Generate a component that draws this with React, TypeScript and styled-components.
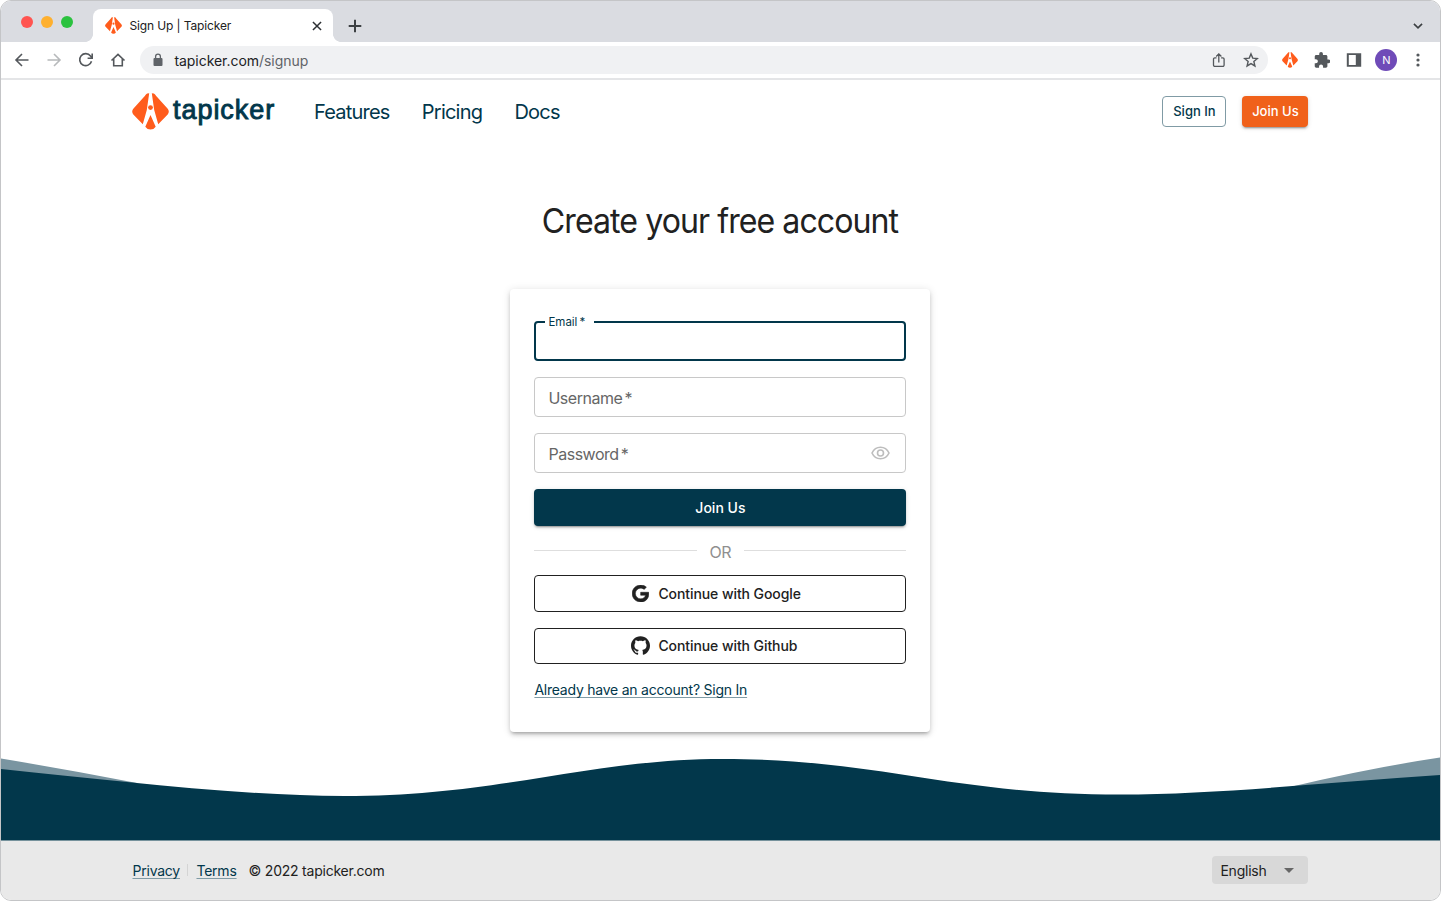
import React from "react";
import styled, { createGlobalStyle } from "styled-components";

const navy = "#02374b";

const GlobalStyle = createGlobalStyle`
  * { box-sizing: border-box; }
  html, body { margin: 0; padding: 0; background: #fff; }
  body { font-family: Inter, "Liberation Sans", sans-serif; color: #212121; }
  button { font-family: inherit; cursor: pointer; }
`;

const Window = styled.div`
  width: 1441px;
  height: 901px;
  overflow: hidden;
  display: flex;
  flex-direction: column;
  background: #fff;
  border: 1px solid #c4c5c7;
  border-radius: 11px;
`;

const TabStrip = styled.div`
  height: 41px;
  flex: none;
  background: #dadce1;
  display: flex;
  align-items: flex-end;
`;

const Lights = styled.div`
  display: flex;
  gap: 8px;
  padding: 0 12px 14px 20.4px;
`;

const Light = styled.span<{ $color: string }>`
  width: 12px;
  height: 12px;
  border-radius: 50%;
  background: ${(p) => p.$color};
`;

const TabFoot = styled.span<{ $side: "left" | "right" }>`
  width: 8px;
  height: 8px;
  flex: none;
  background: radial-gradient(circle at ${(p) => (p.$side === "left" ? "0 0" : "100% 0")}, #dadce1 7.6px, #fff 8.2px);
`;

const Tab = styled.div`
  width: 240px;
  height: 33px;
  background: #fff;
  border-radius: 8px 8px 0 0;
  display: flex;
  align-items: center;
  padding: 0 11px 0 12px;
`;

const TabTitle = styled.span`
  font-size: 12px;
  letter-spacing: -0.12px;
  margin-left: 7px;
  flex: 1;
  white-space: nowrap;
`;

const NewTab = styled.div`
  flex: 1;
  height: 33px;
  display: flex;
  align-items: center;
  justify-content: space-between;
  padding: 0 17px 0 0;
`;

const Toolbar = styled.div`
  height: 38px;
  flex: none;
  border-bottom: 2px solid #e4e5e7;
  display: flex;
  align-items: center;
  padding: 0 13.6px 0 13.4px;
`;

const ToolIcons = styled.div<{ $gap: number }>`
  display: flex;
  align-items: center;
  gap: ${(p) => p.$gap}px;
  svg { display: block; }
`;

const AddressBar = styled.div`
  flex: 1;
  height: 28px;
  margin: 0 14px 0 14px;
  border-radius: 14px;
  background: #f0f1f3;
  display: flex;
  align-items: center;
  padding: 0 9px 0 10px;
`;

const Address = styled.span`
  flex: 1;
  margin-left: 8px;
  font-size: 14px;
  letter-spacing: -0.04px;
  color: #202124;
  span { color: #5f6368; }
`;

const Avatar = styled.span`
  width: 22px;
  height: 22px;
  border-radius: 50%;
  background: #6f4bb8;
  color: #fff;
  font-size: 11px;
  display: flex;
  align-items: center;
  justify-content: center;
  margin: 0 -3px;
`;

const Page = styled.main`
  flex: 1;
  display: flex;
  flex-direction: column;
  min-height: 0;
`;

const Header = styled.header`
  height: 62px;
  margin: 0 131.6px 2px 131px;
  display: flex;
  align-items: center;
`;

const Brand = styled.div`
  display: flex;
  align-items: center;
  width: 182px;
`;

const Wordmark = styled.span`
  font-family: "Liberation Sans", sans-serif;
  font-size: 27px;
  line-height: 32px;
  color: ${navy};
  -webkit-text-stroke: 0.9px ${navy};
  letter-spacing: 0.95px;
  margin: -2px 0 0 4px;
`;

const Nav = styled.nav`
  display: flex;
  gap: 32.2px;
  flex: 1;
  padding-top: 2px;
`;

const NavLink = styled.a`
  font-size: 20px;
  line-height: 32px;
  color: ${navy};
  letter-spacing: -0.78px;
`;

const HeaderButton = styled.button<{ $filled?: boolean }>`
  width: ${(p) => (p.$filled ? 66 : 64)}px;
  height: 31px;
  padding: 0;
  margin-left: ${(p) => (p.$filled ? 16 : 0)}px;
  border-radius: 4px;
  border: ${(p) => (p.$filled ? "none" : "1px solid #809ba5")};
  background: ${(p) => (p.$filled ? "#f0611a" : "#fff")};
  color: ${(p) => (p.$filled ? "#fff" : navy)};
  box-shadow: ${(p) => (p.$filled ? "0 3px 1px -2px rgba(0,0,0,.2), 0 2px 2px rgba(0,0,0,.14), 0 1px 5px rgba(0,0,0,.12)" : "none")};
  font-size: 13px;
  font-weight: 500;
`;

const Title = styled.h1`
  margin: 56px 1px 0 0;
  height: 44px;
  line-height: 43px;
  text-align: center;
  font-size: 33.5px;
  font-weight: 400;
  letter-spacing: -1px;
  transform: scaleX(0.959);
`;

const Card = styled.form`
  width: 420px;
  height: 443px;
  flex: none;
  margin: 45px 0 0 509.4px;
  padding: 32px 24px 0;
  border-radius: 4px;
  background: #fff;
  box-shadow: 0 3px 3px -2px rgba(0,0,0,.2), 0 3px 4px rgba(0,0,0,.14), 0 1px 8px rgba(0,0,0,.12);
  display: flex;
  flex-direction: column;
`;

const Field = styled.div<{ $focused?: boolean }>`
  position: relative;
  height: 40px;
  flex: none;
  margin: 0 0 16px;
  padding: 0 15px 0 13px;
  border: ${(p) => (p.$focused ? `2px solid ${navy}` : "1px solid #c8c8c8")};
  border-radius: 4px;
  display: flex;
  align-items: center;
  justify-content: space-between;
`;

const FloatingLabel = styled.label`
  position: absolute;
  top: -9.5px;
  left: 9px;
  width: 49px;
  padding-left: 3px;
  background: #fff;
  color: ${navy};
  font-size: 11.5px;
  line-height: 16px;
`;

const FieldLabel = styled.label`
  font-size: 16px;
  line-height: 22px;
  padding-top: 2px;
  color: #666;
  letter-spacing: -0.47px;
`;

const Required = styled.span`
  margin-left: 2px;
`;

const Submit = styled.button`
  height: 37px;
  flex: none;
  border: 0;
  border-radius: 4px;
  background: ${navy};
  color: #fff;
  font-size: 14px;
  font-weight: 500;
  box-shadow: 0 3px 1px -2px rgba(0,0,0,.2), 0 2px 2px rgba(0,0,0,.14), 0 1px 5px rgba(0,0,0,.12);
`;

const Divider = styled.div`
  display: flex;
  height: 24px;
  margin: 12px 0 13px;
  align-items: center;
  gap: 12px;
  color: #8f8f8f;
  font-size: 16px;
  &::before, &::after {
    content: "";
    flex: 1;
    height: 1px;
    background: #dedede;
  }
  span { width: 23px; text-align: center; padding-top: 3px; letter-spacing: -0.3px; }
`;

const ProviderButton = styled.button`
  height: 36.5px;
  flex: none;
  margin-bottom: 16px;
  padding: 0 0 0 96px;
  border: 1px solid #212121;
  border-radius: 4px;
  background: #fff;
  color: #212121;
  display: flex;
  align-items: center;
  gap: 8px;
  font-size: 14px;
  font-weight: 500;
  letter-spacing: -0.08px;
`;

const ProviderIcon = styled.span`
  width: 19px;
  display: flex;
  justify-content: center;
`;

const TextLink = styled.a`
  color: ${navy};
  font-size: 14px;
  letter-spacing: -0.23px;
  text-decoration: underline;
  text-decoration-color: #809ba5;
  text-decoration-thickness: 1px;
  text-underline-offset: 2px;
  text-decoration-skip-ink: none;
`;

const LinkRow = styled.div`
  margin-top: -1px;
`;

const Wave = styled.svg`
  display: block;
  margin-top: auto;
  flex: none;
`;

const Footer = styled.footer`
  height: 60px;
  flex: none;
  padding: 0 131.6px 1px 131.5px;
  border-top: 1px solid #76929c;
  background: #e9e9e9;
  display: flex;
  align-items: center;
  font-size: 14px;
  letter-spacing: -0.23px;
`;

const FooterRule = styled.span`
  width: 1px;
  height: 12px;
  background: #d4d4d4;
  margin: 0 8px 0 7.5px;
`;

const Copyright = styled.span`
  margin-left: 12px;
  flex: 1;
`;

const LanguageSelect = styled.div`
  width: 96px;
  height: 28px;
  border-radius: 4px;
  background: #d8d8d8;
  display: flex;
  align-items: center;
  justify-content: space-between;
  padding: 0 14px 0 8px;
`;

function Logo({ size }: { size: number }) {
  return (
    <svg width={size} height={size} viewBox="0 0 37 37">
      <path fill="#ff5c1c" d="M15.2 0.6 17.2 .3 14.8 17 10.8 31.2 1.3 21.4Q-1 18.5 1.5 15.6L12.8 3Q14.300 1 15.2 .6ZM21.8 .6 19.8 .3 22.2 17 26.2 31.2 35.7 21.4Q38 18.5 35.5 15.6L24.2 3Q22.7 1 21.8 .6ZM18.5 22 23.7 33.8Q22 36.6 18.5 36.6T13.3 33.8Z" />
      <circle cx="18.5" cy="14.6" r="2.4" fill="#ff5c1c" />
    </svg>
  );
}

function Stroke({ d, color = "#54585c", size = 16, width = 1.6 }: { d: string; color?: string; size?: number; width?: number }) {
  return (
    <svg width={size} height={size} viewBox="0 0 16 16" fill="none" stroke={color} strokeWidth={width}>
      <path d={d} />
    </svg>
  );
}

export default function App() {
  return (
    <>
      <GlobalStyle />
      <Window>
        <TabStrip>
          <Lights>
            <Light $color="#ff5450" />
            <Light $color="#feb02f" />
            <Light $color="#2bc23f" />
          </Lights>
          <TabFoot $side="left" />
          <Tab>
            <Logo size={17} />
            <TabTitle>Sign Up | Tapicker</TabTitle>
            <Stroke size={10} width={2.4} color="#2d3034" d="M1.5 1.5l13 13M14.5 1.5l-13 13" />
          </Tab>
          <TabFoot $side="right" />
          <NewTab>
            <Stroke size={28} width={1.15} color="#3c4043" d="M8 4.4v7.2M4.4 8h7.2" />
            <Stroke size={10} width={2.6} color="#3c4043" d="M1.5 4.5 8 11l6.5-6.5" />
          </NewTab>
        </TabStrip>
        <Toolbar>
          <ToolIcons $gap={16}>
            <Stroke d="M14.5 8H2M8 2 2 8l6 6" />
            <Stroke color="#b7b9bb" d="M1.5 8H14M8 2l6 6-6 6" />
            <Stroke d="M13.5 9.2A6 6 0 1 1 12.5 4L14 5.8M14.2 1.5v4.7H9.6" />
            <Stroke d="M1.5 8.5 8 2.3l6.5 6.2M3.7 7v6.8h8.6V7" />
          </ToolIcons>
          <AddressBar>
            <svg width="16" height="16" viewBox="0 0 16 16">
              <rect x="3.5" y="6" width="9" height="8" rx="1" fill="#5f6368" />
              <path d="M5.6 6V4.5a2.4 2.4 0 0 1 4.8 0V6" fill="none" stroke="#5f6368" strokeWidth="1.3" />
            </svg>
            <Address>tapicker.com<span>/signup</span></Address>
            <ToolIcons $gap={16}>
              <Stroke width={1.3} d="M5.5 5.8H3.8A1.3 1.3 0 0 0 2.5 7.1v6A1.3 1.3 0 0 0 3.8 14.4h8a1.3 1.3 0 0 0 1.3-1.3v-6A1.3 1.3 0 0 0 11.8 5.8h-1.7M7.8 10.5V2M5.2 4.5 7.8 1.9l2.6 2.6" />
              <Stroke width={1.4} d="M8 1.9l1.75 4.2 4.55.4-3.45 3 1.05 4.45L8 11.6l-3.9 2.35 1.05-4.45-3.45-3 4.55-.4Z" />
            </ToolIcons>
          </AddressBar>
          <ToolIcons $gap={16}>
            <Logo size={16} />
            <svg width="16" height="16" viewBox="1 1 21.5 21.5" fill="#54585c">
              <path d="M20.5 11H19V7c0-1.1-.9-2-2-2h-4V3.5a2.5 2.5 0 0 0-5 0V5H4c-1.1 0-1.99.9-1.99 2v3.8H3.5c1.49 0 2.7 1.21 2.7 2.7s-1.21 2.7-2.7 2.7H2V20c0 1.1.9 2 2 2h3.8v-1.5c0-1.49 1.21-2.7 2.7-2.7s2.7 1.21 2.7 2.7V22H17c1.1 0 2-.9 2-2v-4h1.5a2.5 2.5 0 0 0 0-5z" />
            </svg>
            <svg width="16" height="16" viewBox="0 0 16 16" fill="#54585c">
              <path fillRule="evenodd" d="M.8 1.2h14.4v13.6H.8ZM2.8 3v10h7V3Z" />
            </svg>
            <Avatar>N</Avatar>
            <svg width="16" height="16" viewBox="0 0 16 16" fill="#54585c">
              <circle cx="8" cy="3" r="1.6" /><circle cx="8" cy="8" r="1.6" /><circle cx="8" cy="13" r="1.6" />
            </svg>
          </ToolIcons>
        </Toolbar>
        <Page>
          <Header>
            <Brand><Logo size={37} /><Wordmark>tapicker</Wordmark></Brand>
            <Nav>
              <NavLink>Features</NavLink>
              <NavLink>Pricing</NavLink>
              <NavLink>Docs</NavLink>
            </Nav>
            <HeaderButton>Sign In</HeaderButton>
            <HeaderButton $filled>Join Us</HeaderButton>
          </Header>
          <Title>Create your free account</Title>
          <Card>
            <Field $focused><FloatingLabel>Email<Required>*</Required></FloatingLabel></Field>
            <Field><FieldLabel>Username<Required>*</Required></FieldLabel></Field>
            <Field>
              <FieldLabel>Password<Required>*</Required></FieldLabel>
              <svg width="19" height="14" viewBox="0 0 19 14" fill="none" stroke="#bdbdbd" strokeWidth="1.6">
                <path d="M1 7C4.6-.7 14.4-.7 18 7 14.4 14.7 4.6 14.7 1 7Z" />
                <circle cx="9.5" cy="7" r="3" />
              </svg>
            </Field>
            <Submit type="button">Join Us</Submit>
            <Divider><span>OR</span></Divider>
            <ProviderButton type="button">
              <ProviderIcon>
                <svg width="17" height="17" viewBox="0 0 24 24" fill="#212121" stroke="#212121" strokeWidth="0.8">
                  <path d="M12.24 10.285V14.4h6.806c-.275 1.765-2.056 5.174-6.806 5.174-4.095 0-7.439-3.389-7.439-7.574s3.345-7.574 7.439-7.574c2.33 0 3.891.989 4.785 1.849l3.254-3.138C18.189 1.186 15.479 0 12.24 0c-6.635 0-12 5.365-12 12s5.365 12 12 12c6.926 0 11.52-4.869 11.52-11.726 0-.788-.085-1.39-.189-1.989H12.24z" />
                </svg>
              </ProviderIcon>
              Continue with Google
            </ProviderButton>
            <ProviderButton type="button">
              <ProviderIcon>
                <svg width="19" height="19" viewBox="0 0 24 24" fill="#212121">
                  <path d="M12 .297c-6.63 0-12 5.373-12 12 0 5.303 3.438 9.8 8.205 11.385.6.113.82-.258.82-.577 0-.285-.01-1.04-.015-2.04-3.338.724-4.042-1.61-4.042-1.61C4.422 18.07 3.633 17.7 3.633 17.7c-1.087-.744.084-.729.084-.729 1.205.084 1.838 1.236 1.838 1.236 1.07 1.835 2.809 1.305 3.495.998.108-.776.417-1.305.76-1.605-2.665-.3-5.466-1.332-5.466-5.93 0-1.31.465-2.38 1.235-3.22-.135-.303-.54-1.523.105-3.176 0 0 1.005-.322 3.3 1.23.96-.267 1.98-.399 3-.405 1.02.006 2.04.138 3 .405 2.28-1.552 3.285-1.23 3.285-1.23.645 1.653.24 2.873.12 3.176.765.84 1.23 1.91 1.23 3.22 0 4.61-2.805 5.625-5.475 5.92.42.36.81 1.096.81 2.22 0 1.606-.015 2.896-.015 3.286 0 .315.21.69.825.57C20.565 22.092 24 17.592 24 12.297c0-6.627-5.373-12-12-12" />
                </svg>
              </ProviderIcon>
              Continue with Github
            </ProviderButton>
            <LinkRow><TextLink>Already have an account? Sign In</TextLink></LinkRow>
          </Card>
          <Wave width="1439" height="83" viewBox="1 757 1439 83">
            <path fill="#7a95a1" d="M1 758.5Q70 770 137 783L1 783ZM1440 757.5Q1370 768 1290 787H1440Z" />
            <path fill={navy} d="M1 769C110 780 240 796 344 796C500 796 590 759 723 759C880 759 950 794.5 1120 794.5C1220 794.5 1330 782 1440 775V841H1Z" />
          </Wave>
          <Footer>
            <TextLink>Privacy</TextLink>
            <FooterRule />
            <TextLink>Terms</TextLink>
            <Copyright>© 2022 tapicker.com</Copyright>
            <LanguageSelect>
              English
              <svg width="10" height="5" viewBox="0 0 10 5" fill="#666"><path d="M0 0h10L5 5Z" /></svg>
            </LanguageSelect>
          </Footer>
        </Page>
      </Window>
    </>
  );
}
